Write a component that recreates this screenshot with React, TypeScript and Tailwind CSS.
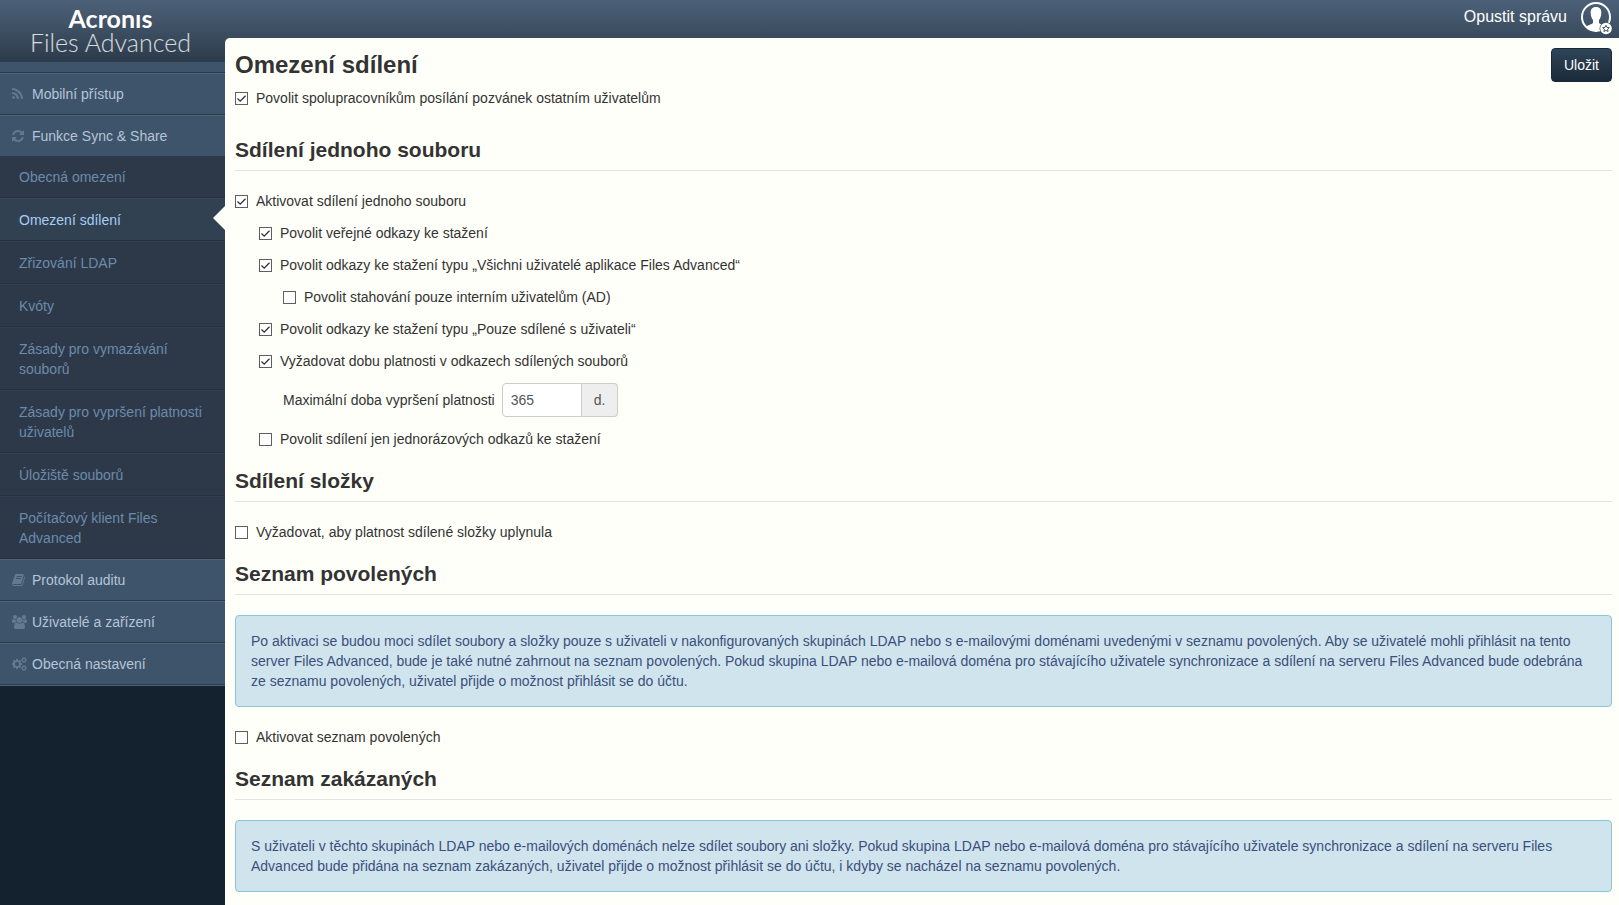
import React, { useState } from 'react';
import clsx from 'clsx';

const icons = {
  rss: {
    viewBox: '0 0 1408 1792',
    d: 'M384 1344q0 80-56 136t-136 56-136-56-56-136 56-136 136-56 136 56 56 136zm512 123q2 28-17 48-18 21-47 21h-135q-25 0-43-16.5t-20-41.5q-22-229-184.5-391.5t-391.5-184.5q-25-2-41.5-20t-16.5-43v-135q0-29 21-47 17-17 43-17h5q160 13 306 80.5t259 181.5q114 113 181.5 259t80.5 306zm512 2q2 27-18 47-18 20-46 20h-143q-26 0-44.5-17.5t-19.5-42.5q-12-215-101-408.5t-231.5-336-336-231.5-408.5-102q-25-1-42.5-19.5t-17.5-43.5v-143q0-28 20-46 18-18 44-18h3q262 13 501.5 120t425.5 294q187 186 294 425.5t120 501.5z',
  },
  refresh: {
    viewBox: '0 0 1536 1792',
    d: 'M1511 1056q0 5-1 7-64 268-268 434.5t-478 166.5q-146 0-282.5-55t-243.5-157l-129 129q-19 19-45 19t-45-19-19-45v-448q0-26 19-45t45-19h448q26 0 45 19t19 45-19 45l-137 137q71 66 161 102t187 36q134 0 250-65t186-179q11-17 53-117 8-23 30-23h192q13 0 22.5 9.5t9.5 22.5zm25-800v448q0 26-19 45t-45 19h-448q-26 0-45-19t-19-45 19-45l138-138q-148-137-349-137-134 0-250 65t-186 179q-11 17-53 117-8 23-30 23h-199q-13 0-22.5-9.5t-9.5-22.5v-7q65-268 270-434.5t480-166.5q146 0 284 55.5t245 156.5l130-129q19-19 45-19t45 19 19 45z',
  },
  book: {
    viewBox: '0 0 1664 1792',
    d: 'M1639 478q40 57 18 129l-275 906q-19 64-76.5 107.5t-122.5 43.5h-923q-77 0-148.5-53.5t-99.5-131.5q-24-67-2-127 0-4 3-27t4-37q1-8-3-21.5t-3-19.5q2-11 8-21t16.5-23.5 16.5-23.5q23-38 45-91.5t30-91.5q3-10 .5-30t-.5-28q3-11 17-28t17-23q21-36 42-92t25-90q1-9-2.5-32t.5-28q4-13 22-30.5t22-22.5q19-26 42.5-84.5t27.5-96.5q1-8-3-25.5t-2-26.5q2-8 9-18t18-23 17-21q8-12 16.5-30.5t15-35 16-36 19.5-32 26.5-23.5 36-11.5 47.5 5.5l-1 3q38-9 51-9h761q74 0 114 56t18 130l-274 906q-36 119-71.5 153.5t-128.5 34.5h-869q-27 0-38 15-11 16-1 43 24 70 144 70h923q29 0 56-15.5t35-41.5l300-987q7-22 5-57 38 15 59 43zm-1064 2q-4 13 2 22.5t20 9.5h608q13 0 25.5-9.5t16.5-22.5l21-64q4-13-2-22.5t-20-9.5h-608q-13 0-25.5 9.5t-16.5 22.5zm-83 256q-4 13 2 22.5t20 9.5h608q13 0 25.5-9.5t16.5-22.5l21-64q4-13-2-22.5t-20-9.5h-608q-13 0-25.5 9.5t-16.5 22.5z',
  },
  users: {
    viewBox: '0 0 1920 1792',
    d: 'M593 896q-162 5-265 128h-134q-82 0-138-40.5t-56-118.5q0-353 124-353 6 0 43.5 21t97.5 42.5 119 21.5q67 0 133-23-5 37-5 66 0 139 81 256zm1071 637q0 120-73 189.5t-194 69.5h-874q-121 0-194-69.5t-73-189.5q0-53 3.5-103.5t14-109 26.5-108.5 43-97.5 62-81 85.5-53.5 111.5-20q10 0 43 21.5t73 48 107 48 135 21.5 135-21.5 107-48 73-48 43-21.5q61 0 111.5 20t85.5 53.5 62 81 43 97.5 26.5 108.5 14 109 3.5 103.5zm-1024-1277q0 106-75 181t-181 75-181-75-75-181 75-181 181-75 181 75 75 181zm704 384q0 159-112.5 271.5t-271.5 112.5-271.5-112.5-112.5-271.5 112.5-271.5 271.5-112.5 271.5 112.5 112.5 271.5zm576 225q0 78-56 118.5t-138 40.5h-134q-103-123-265-128 81-117 81-256 0-29-5-66 66 23 133 23 59 0 119-21.5t97.5-42.5 43.5-21q124 0 124 353zm-128-609q0 106-75 181t-181 75-181-75-75-181 75-181 181-75 181 75 75 181z',
  },
  cogs: {
    viewBox: '0 0 1920 1792',
    d: 'M896 896q0-106-75-181t-181-75-181 75-75 181 75 181 181 75 181-75 75-181zm768 512q0-52-38-90t-90-38-90 38-38 90q0 53 37.5 90.5t90.5 37.5 90.5-37.5 37.5-90.5zm0-1024q0-52-38-90t-90-38-90 38-38 90q0 53 37.5 90.5t90.5 37.5 90.5-37.5 37.5-90.5zm-384 421v185q0 10-7 19.5t-16 10.5l-155 24q-11 35-32 76 34 48 90 115 7 11 7 20 0 12-7 19-23 30-82.5 89.5t-78.5 59.5q-11 0-21-7l-115-90q-37 19-77 31-11 108-23 155-7 24-30 24h-186q-11 0-20-7.5t-10-17.5l-23-153q-34-10-75-31l-118 89q-7 7-20 7-11 0-21-8-144-133-144-160 0-9 7-19 10-14 41-53t47-61q-23-44-35-82l-152-24q-10-1-17-9.5t-7-19.5v-185q0-10 7-19.5t16-10.5l155-24q11-35 32-76-34-48-90-115-7-11-7-20 0-12 7-20 22-30 82-89t79-59q11 0 21 7l115 90q34-18 77-32 11-108 23-154 7-24 30-24h186q11 0 20 7.5t10 17.5l23 153q34 10 75 31l118-89q8-7 20-7 11 0 21 8 144 133 144 160 0 8-7 19-12 16-42 54t-45 60q23 48 34 82l152 23q10 2 17 10.5t7 19.5zm640 533v140q0 16-149 31-12 27-30 52 51 113 51 138 0 4-4 7-122 71-124 71-8 0-46-47t-52-68q-20 2-30 2t-30-2q-14 21-52 68t-46 47q-2 0-124-71-4-3-4-7 0-25 51-138-18-25-30-52-149-15-149-31v-140q0-16 149-31 13-29 30-52-51-113-51-138 0-4 4-7 4-2 35-20t59-34 30-16q8 0 46 46.5t52 67.5q20-2 30-2t30 2q51-71 92-112l6-2q4 0 124 70 4 3 4 7 0 25-51 138 17 23 30 52 149 15 149 31zm0-1024v140q0 16-149 31-12 27-30 52 51 113 51 138 0 4-4 7-122 71-124 71-8 0-46-47t-52-68q-20 2-30 2t-30-2q-14 21-52 68t-46 47q-2 0-124-71-4-3-4-7 0-25 51-138-18-25-30-52-149-15-149-31v-140q0-16 149-31 13-29 30-52-51-113-51-138 0-4 4-7 4-2 35-20t59-34 30-16q8 0 46 46.5t52 67.5q20-2 30-2t30 2q51-71 92-112l6-2q4 0 124 70 4 3 4 7 0 25-51 138 17 23 30 52 149 15 149 31z',
  },
};

type IconName = keyof typeof icons;

const syncPages = [
  'Obecná omezení',
  'Omezení sdílení',
  'Zřizování LDAP',
  'Kvóty',
  'Zásady pro vymazávání souborů',
  'Zásady pro vypršení platnosti uživatelů',
  'Úložiště souborů',
  'Počítačový klient Files Advanced',
];

const NavItem: React.FC<{ icon: IconName; label: string }> = ({ icon, label }) => (
  <a
    href="#"
    className="flex h-[42px] items-center border-t border-b border-t-[#4d647b] border-b-[#2b3a49] bg-[#3e546a] pl-3 text-[#b4c5d8]"
  >
    <span className="w-5">
      <svg viewBox={icons[icon].viewBox} className="h-3.5 fill-[#64798f]" aria-hidden="true">
        <path d={icons[icon].d} />
      </svg>
    </span>
    {label}
  </a>
);

const SubItem: React.FC<{ label: string; active?: boolean }> = ({ label, active }) => (
  <a
    href="#"
    className={clsx(
      'relative block border-t border-b border-b-[#263240] pt-[11px] pr-4 pb-2.5 pl-[19px] first:border-t-0 first:pt-2.5',
      active ? 'border-t-[#36485a] bg-[#314152] text-[#a6cdf2]' : 'border-t-[#313f50] bg-[#2d3949] text-[#6c8bab]',
    )}
  >
    {label}
    {active && (
      <svg viewBox="0 0 12 24" className="absolute top-[7px] right-0 h-6 w-3 fill-[#fffffa]" aria-hidden="true">
        <path d="M12 0v24L0 12z" />
      </svg>
    )}
  </a>
);

const Check: React.FC<{ label: string; defaultChecked?: boolean; className?: string }> = ({
  label,
  defaultChecked,
  className,
}) => (
  <label className={clsx('flex w-fit items-center gap-2', className)}>
    <span className="relative flex">
      <input
        type="checkbox"
        defaultChecked={defaultChecked}
        className="peer h-[13px] w-[13px] appearance-none border border-[#5f5f62] bg-white"
      />
      <svg
        viewBox="0 0 13 13"
        className="pointer-events-none absolute inset-0 hidden fill-none stroke-[#2f2f33] peer-checked:block"
        aria-hidden="true"
      >
        <path d="M2.500 6.500l2.700 2.700 5.300-5.400" strokeWidth="1.300" />
      </svg>
    </span>
    {label}
  </label>
);

const SectionTitle: React.FC<{ children: React.ReactNode }> = ({ children }) => (
  <h2 className="mt-5 mb-5 border-b border-[#e2e4e4] pb-2 text-[21px] leading-6 font-bold">{children}</h2>
);

const Note: React.FC<{ children: React.ReactNode }> = ({ children }) => (
  <p className="mb-5 rounded-[4px] border border-[#86c8d0] bg-[#d0e4ed] p-[15px] text-[#3b4f7c]">{children}</p>
);

const App: React.FC = () => {
  const [days, setDays] = useState('365');

  return (
    <div className="flex min-h-screen bg-[#14212e] bg-[linear-gradient(#4c6178,#2c3b4b)] bg-[length:100%_62px] bg-no-repeat font-['Liberation_Sans',Arial,sans-serif] text-[14px] leading-5 text-[#333]">
      <aside className="w-[225px] shrink-0">
        <div className="h-[62px] pt-1.5 pr-1 text-center font-['Lato',sans-serif] text-[25px] leading-6 text-white">
          <span className="font-bold">Acronıs</span>
          <br />
          <span className="font-light text-white/80">Files Advanced</span>
        </div>
        <nav>
          <div className="h-[11px] border-b border-[#2b3a49] bg-[#3e546a]" />
          <NavItem icon="rss" label="Mobilní přístup" />
          <NavItem icon="refresh" label="Funkce Sync & Share" />
          <div>
            {syncPages.map((page) => (
              <SubItem key={page} label={page} active={page === 'Omezení sdílení'} />
            ))}
          </div>
          <NavItem icon="book" label="Protokol auditu" />
          <NavItem icon="users" label="Uživatelé a zařízení" />
          <NavItem icon="cogs" label="Obecná nastavení" />
          <div className="h-px bg-[#4d647b]" />
        </nav>
      </aside>

      <div className="flex min-w-0 flex-1 flex-col">
        <header className="flex h-[38px] justify-end gap-3.5 pr-1.5 text-white">
          <a href="#" className="pt-[7px] text-[16px]">Opustit správu</a>
          <a href="#" aria-label="Účet">
            <svg viewBox="0 0 32 36" className="h-9 w-8" aria-hidden="true">
              <circle cx="15" cy="17" r="14" fill="none" stroke="#fff" strokeWidth="2" />
              <path
                fill="#fff"
                d="M15 7c4 0 5.500 2.500 5.300 6 0 3-1 5.500-2.300 7v3c1.500 1.500 5 2 6.500 3.500C22.500 29 19 31 15 31s-7.500-2-9.500-4.500C7 25 10.500 24.500 12 23v-3c-1.300-1.500-2.300-4-2.300-7C9.500 9.500 11 7 15 7z"
              />
              <circle cx="25" cy="28.500" r="6.500" fill="#3f5265" />
              <circle cx="25" cy="28.500" r="5.800" fill="#fff" />
              <path
                fill="none"
                stroke="#3f5265"
                d="M25 25.300l1 2.100 2.300.3-1.700 1.500.5 2.300-2.100-1.100-2.100 1.100.5-2.300-1.700-1.500 2.300-.3z"
              />
            </svg>
          </a>
        </header>

        <main className="flex-1 rounded-tl-[5px] bg-[#fffffa] pt-2.5 pr-[7px] pl-2.5">
          <div className="mb-1.5 flex items-center justify-between">
            <h1 className="text-[24px] leading-8 font-bold">Omezení sdílení</h1>
            <button
              type="button"
              className="h-[34px] rounded-[4px] border border-[#1a2938] bg-linear-to-b from-[#2f4558] to-[#1b2a39] px-3 text-white"
            >
              Uložit
            </button>
          </div>
          <Check defaultChecked label="Povolit spolupracovníkům posílání pozvánek ostatním uživatelům" />

          <section className="mt-[30px]">
            <SectionTitle>Sdílení jednoho souboru</SectionTitle>
            <div className="flex flex-col gap-3">
              <Check defaultChecked label="Aktivovat sdílení jednoho souboru" />
              <Check defaultChecked className="ml-6" label="Povolit veřejné odkazy ke stažení" />
              <Check
                defaultChecked
                className="ml-6"
                label="Povolit odkazy ke stažení typu „Všichni uživatelé aplikace Files Advanced“"
              />
              <Check className="ml-12" label="Povolit stahování pouze interním uživatelům (AD)" />
              <Check
                defaultChecked
                className="ml-6"
                label="Povolit odkazy ke stažení typu „Pouze sdílené s uživateli“"
              />
              <Check
                defaultChecked
                className="ml-6"
                label="Vyžadovat dobu platnosti v odkazech sdílených souborů"
              />
              <div className="ml-12 flex items-center gap-[7px]">
                <label htmlFor="max-days">Maximální doba vypršení platnosti</label>
                <div className="flex h-[34px]">
                  <input
                    id="max-days"
                    type="text"
                    value={days}
                    onChange={(e) => setDays(e.target.value)}
                    className="w-20 rounded-l-[4px] border border-[#ccc] bg-white px-2 text-[#555]"
                  />
                  <span className="flex items-center rounded-r-[4px] border border-l-0 border-[#ccc] bg-[#eee] px-3 text-[#555]">
                    d.
                  </span>
                </div>
              </div>
              <Check className="ml-6" label="Povolit sdílení jen jednorázových odkazů ke stažení" />
            </div>
          </section>

          <section>
            <SectionTitle>Sdílení složky</SectionTitle>
            <Check label="Vyžadovat, aby platnost sdílené složky uplynula" />
          </section>

          <section>
            <SectionTitle>Seznam povolených</SectionTitle>
            <Note>
              Po aktivaci se budou moci sdílet soubory a složky pouze s uživateli v nakonfigurovaných skupinách LDAP
              nebo s e-mailovými doménami uvedenými v seznamu povolených. Aby se uživatelé mohli přihlásit na tento
              server Files Advanced, bude je také nutné zahrnout na seznam povolených. Pokud skupina LDAP nebo
              e-mailová doména pro stávajícího uživatele synchronizace a sdílení na serveru Files Advanced bude
              odebrána ze seznamu povolených, uživatel přijde o možnost přihlásit se do účtu.
            </Note>
            <Check label="Aktivovat seznam povolených" />
          </section>

          <section>
            <SectionTitle>Seznam zakázaných</SectionTitle>
            <Note>
              S uživateli v těchto skupinách LDAP nebo e-mailových doménách nelze sdílet soubory ani složky. Pokud
              skupina LDAP nebo e-mailová doména pro stávajícího uživatele synchronizace a sdílení na serveru Files
              Advanced bude přidána na seznam zakázaných, uživatel přijde o možnost přihlásit se do účtu, i kdyby se
              nacházel na seznamu povolených.
            </Note>
          </section>
        </main>
      </div>
    </div>
  );
};

export default App;
